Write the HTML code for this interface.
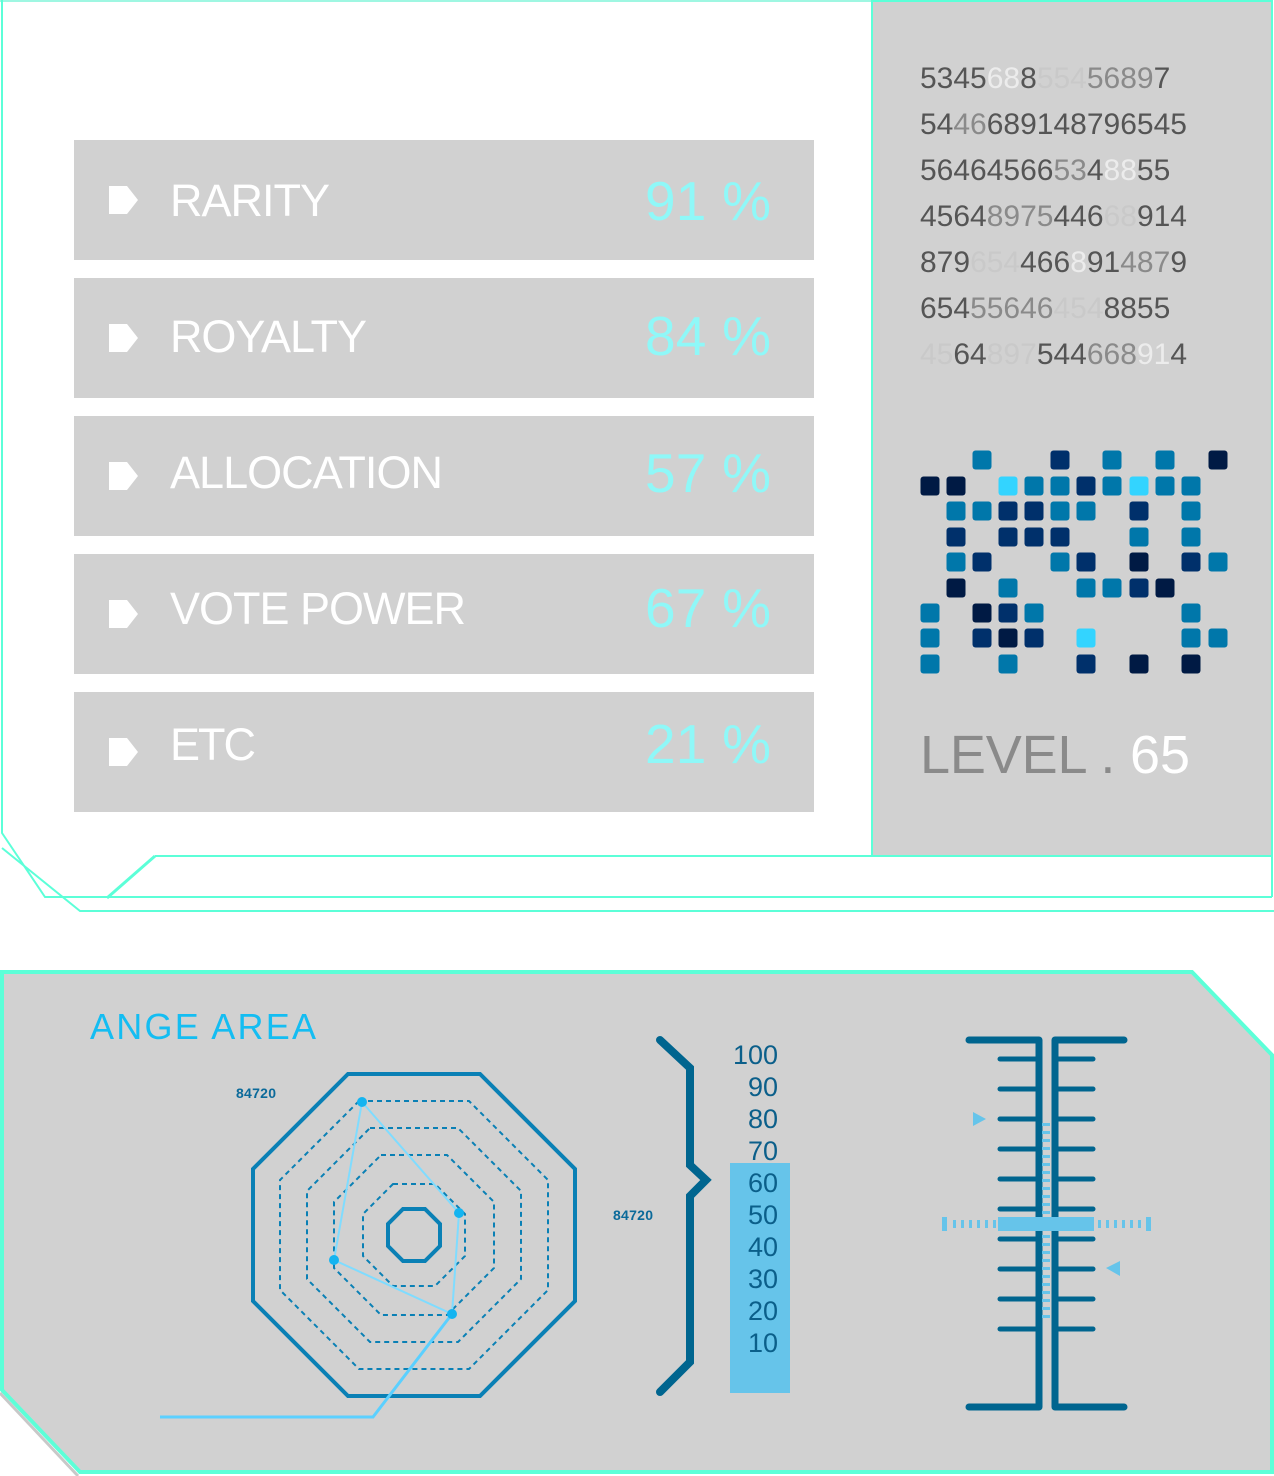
<!DOCTYPE html>
<html><head><meta charset="utf-8"><style>
html,body{margin:0;padding:0;background:#fff;}
svg{display:block;}
text{font-family:"Liberation Sans",sans-serif;}
</style></head><body>
<svg width="1274" height="1476" viewBox="0 0 1274 1476" xmlns="http://www.w3.org/2000/svg">
<!-- top frame -->
<line x1="0" y1="1" x2="872" y2="1" stroke="#9ff7e2" stroke-width="2"/>
<polyline points="2,0 2,833 45,897 1272,897" fill="none" stroke="#5cffd8" stroke-width="2"/>
<polyline points="2,848 80,911 1274,911" fill="none" stroke="#5cffd8" stroke-width="2"/>
<rect x="872" y="1" width="400" height="855" fill="#d1d1d1" stroke="#5cffd8" stroke-width="2"/>
<polyline points="155,856 1272,856 1272,897" fill="none" stroke="#5cffd8" stroke-width="2"/>
<line x1="107" y1="898" x2="155" y2="856" stroke="#5cffd8" stroke-width="3"/>

<!-- rows -->
<g>
<rect x="74" y="140" width="740" height="120" fill="#d1d1d1"/>
<rect x="74" y="278" width="740" height="120" fill="#d1d1d1"/>
<rect x="74" y="416" width="740" height="120" fill="#d1d1d1"/>
<rect x="74" y="554" width="740" height="120" fill="#d1d1d1"/>
<rect x="74" y="692" width="740" height="120" fill="#d1d1d1"/>
<g fill="#fff">
<polygon points="109,186 127,186 138,200 127,214 109,214"/>
<polygon points="109,324 127,324 138,338 127,352 109,352"/>
<polygon points="109,462 127,462 138,476 127,490 109,490"/>
<polygon points="109,600 127,600 138,614 127,628 109,628"/>
<polygon points="109,738 127,738 138,752 127,766 109,766"/>
</g>
<g fill="#fff" font-size="45">
<text x="170" y="216" textLength="160">RARITY</text>
<text x="170" y="352" textLength="197">ROYALTY</text>
<text x="170" y="488" textLength="273">ALLOCATION</text>
<text x="170" y="624" textLength="296">VOTE POWER</text>
<text x="170" y="760" textLength="86">ETC</text>
</g>
<g fill="#8ff8f8" font-size="55">
<text x="645" y="220" textLength="126">91 %</text>
<text x="645" y="355" textLength="126">84 %</text>
<text x="645" y="492" textLength="126">57 %</text>
<text x="645" y="627" textLength="126">67 %</text>
<text x="645" y="763" textLength="126">21 %</text>
</g>
</g>

<!-- numbers -->
<g font-size="30" fill="#555">
<text x="920" y="88">5345<tspan fill="#ececec">68</tspan>8<tspan fill="#c9c9c9">554</tspan><tspan fill="#8a8a8a">5689</tspan>7</text>
<text x="920" y="134">54<tspan fill="#8a8a8a">46</tspan>689148796545</text>
<text x="920" y="180">56464566<tspan fill="#8a8a8a">53</tspan>4<tspan fill="#ececec">88</tspan>55</text>
<text x="920" y="226">4564<tspan fill="#8a8a8a">8975</tspan>446<tspan fill="#c9c9c9">68</tspan>914</text>
<text x="920" y="272">879<tspan fill="#c9c9c9">654</tspan>466<tspan fill="#ececec">8</tspan>91<tspan fill="#8a8a8a">487</tspan>9</text>
<text x="920" y="318">654<tspan fill="#8a8a8a">55646</tspan><tspan fill="#c9c9c9">454</tspan>8855</text>
<text x="920" y="364"><tspan fill="#c9c9c9">45</tspan>64<tspan fill="#c9c9c9">897</tspan>544<tspan fill="#8a8a8a">668</tspan><tspan fill="#ececec">91</tspan>4</text>
</g>

<!-- grid -->
<g id="grid"></g>
<text x="920" y="773" font-size="54" fill="#8a8a8a" textLength="270">LEVEL . <tspan fill="#fff">65</tspan></text>

<!-- bottom panel -->
<line x1="0" y1="1393" x2="78" y2="1476" stroke="#c8c8c8" stroke-width="3"/>
<polygon points="2,972 1192,972 1272,1055 1272,1472 80,1472 2,1390" fill="#d1d1d1" stroke="#5cffd8" stroke-width="4"/>
<text x="90" y="1039" font-size="36" fill="#14bdf2" textLength="226">ANGE AREA</text>

<!-- octagons -->
<g fill="none" stroke="#0a80b5">
<polygon stroke-width="4" points="348,1074 480,1074 575,1169 575,1301 480,1396 348,1396 253,1301 253,1169"/>
<g stroke-width="2" stroke-dasharray="5,4">
<polygon points="359,1101 469,1101 548,1180 548,1290 469,1369 359,1369 280,1290 280,1180"/>
<polygon points="370,1128 458,1128 521,1191 521,1279 458,1342 370,1342 307,1279 307,1191"/>
<polygon points="381,1155 447,1155 494,1202 494,1268 447,1315 381,1315 334,1268 334,1202"/>
<polygon points="393,1184 435,1184 465,1214 465,1256 435,1286 393,1286 363,1256 363,1214"/>
</g>
<polygon stroke-width="4" points="403,1209 425,1209 440,1224 440,1246 425,1261 403,1261 388,1246 388,1224"/>
</g>
<g stroke="#7fdcff" stroke-width="2" fill="none">
<polygon points="362,1102 459,1213 452,1314 334,1260"/>
</g>
<polyline points="452,1314 373,1417 160,1417" fill="none" stroke="#5bd0ff" stroke-width="3"/>
<g fill="#14b4f0">
<circle cx="362" cy="1102" r="5"/><circle cx="459" cy="1213" r="5"/><circle cx="452" cy="1314" r="5"/><circle cx="334" cy="1260" r="5"/>
</g>
<g font-size="14" font-weight="bold" fill="#0b6a9a">
<text x="236" y="1098" textLength="40">84720</text>
<text x="613" y="1220" textLength="40">84720</text>
</g>

<!-- brace & scale -->
<polyline points="660,1040 690,1068 690,1165 706,1180 690,1196 690,1362 660,1392" fill="none" stroke="#00658f" stroke-width="8" stroke-linecap="round" stroke-linejoin="miter"/>
<rect x="730" y="1163" width="60" height="230" fill="#66c4ea"/>
<g font-size="27" fill="#0b5f8a" text-anchor="end">
<text x="778" y="1064">100</text><text x="778" y="1096">90</text><text x="778" y="1128">80</text><text x="778" y="1160">70</text><text x="778" y="1192">60</text><text x="778" y="1224">50</text><text x="778" y="1256">40</text><text x="778" y="1288">30</text><text x="778" y="1320">20</text><text x="778" y="1352">10</text>
</g>

<!-- ruler -->
<g stroke="#00658f" fill="none" stroke-linecap="round">
<polyline points="969,1040 1039,1040 1039,1407 969,1407" stroke-width="7" stroke-linejoin="round"/>
<polyline points="1124,1040 1055,1040 1055,1407 1124,1407" stroke-width="7" stroke-linejoin="round"/>
<g stroke-width="5" id="ticks"></g>
</g>
<g id="rdash" fill="#66c4ea"></g>
<rect x="998" y="1217" width="96" height="14" fill="#66c4ea"/>
<polygon points="973,1112 986,1119 973,1126" fill="#66c4ea"/>
<polygon points="1120,1261 1106,1268 1120,1276" fill="#66c4ea"/>
</svg>
<script>
(function(){
var NS="http://www.w3.org/2000/svg";
var C={d:"#001a44",n:"#00306b",m:"#0077aa",l:"#33d4ff"};
var rows=[
"..m..n.m.m.d",
"dd.lmmnmlmm.",
".mmnnmm.n.m.",
".n.nnn..m.m.",
".mn..mn.d.nm",
".d.m..mmnd..",
"m.dnm.....m.",
"m.ndn.l...mm",
"m..m..n.d.d."];
var xs=[930,956,982,1008,1034,1060,1086,1112,1139,1165,1191,1218];
var ys=[460,486,511,537,562,588,613,638,664];
var g=document.getElementById("grid");
rows.forEach(function(r,i){for(var j=0;j<r.length;j++){var c=r[j];if(c==".")continue;
var e=document.createElementNS(NS,"rect");e.setAttribute("x",xs[j]-9.5);e.setAttribute("y",ys[i]-9.5);
e.setAttribute("width",19);e.setAttribute("height",19);e.setAttribute("rx",3);e.setAttribute("fill",C[c]);g.appendChild(e);}});
var t=document.getElementById("ticks");
for(var k=0;k<10;k++){var y=1059+30*k;
[[1000,1038],[1056,1093]].forEach(function(p){var l=document.createElementNS(NS,"line");l.setAttribute("x1",p[0]);l.setAttribute("x2",p[1]);l.setAttribute("y1",y);l.setAttribute("y2",y);t.appendChild(l);});}
var d=document.getElementById("rdash");
function R(x,y,w,h){var e=document.createElementNS(NS,"rect");e.setAttribute("x",x);e.setAttribute("y",y);e.setAttribute("width",w);e.setAttribute("height",h);d.appendChild(e);}
for(var y=1123;y<1320;y+=8){if(y>1215&&y<1233)continue;R(1042,y,8,3);}
R(942,1217,5,14);R(1146,1217,5,14);
for(var x=953;x<998;x+=8)R(x,1220,3,8);
for(var x=1098;x<1144;x+=8)R(x,1220,3,8);
})();
</script>
</body></html>
